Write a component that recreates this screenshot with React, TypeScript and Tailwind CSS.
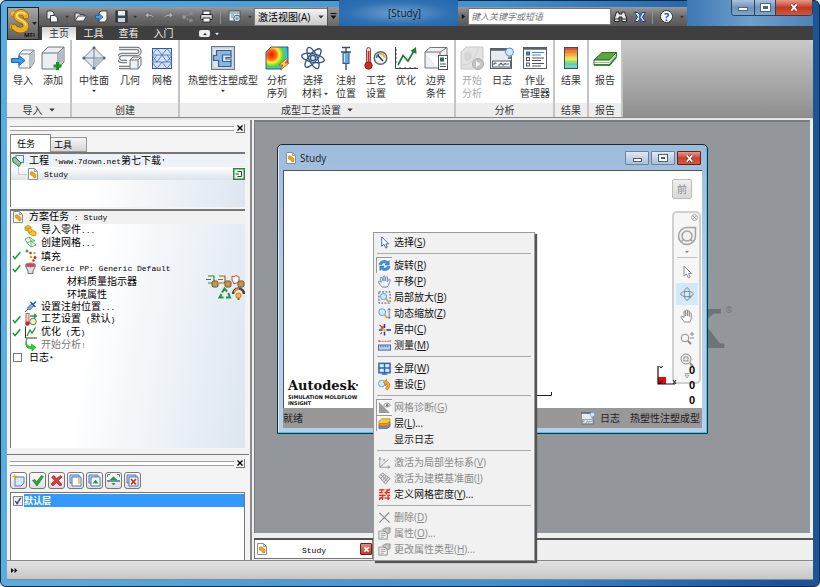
import React from "react";

type Kids = { children?: React.ReactNode };

const UI = "font-['Open_Sans','Noto_Sans_CJK_SC',sans-serif]";

/* ---------- small shared pieces ---------- */

function Caret({ className = "" }: { className?: string }) {
  return (
    <svg viewBox="0 0 6 4" className={`h-[4px] w-[6px] shrink-0 ${className}`} aria-hidden>
      <path d="M0.3 0.4H5.7L3 3.6Z" fill="currentColor" />
    </svg>
  );
}

function Mono({ children }: Kids) {
  return (
    <span className="whitespace-pre font-['Liberation_Mono',monospace] text-[8px]">{children}</span>
  );
}

function Svg({ size, box = 24, children }: { size: string; box?: number } & Kids) {
  return (
    <svg viewBox={`0 0 ${box} ${box}`} className={`shrink-0 ${size}`} fill="none" aria-hidden>
      {children}
    </svg>
  );
}

function StudyIcon() {
  return (
    <Svg size="size-[12px]" box={12}>
      <path d="M1.5 0.5H7.5L10.5 3.5V11.5H1.5Z" fill="#fdfdfd" stroke="#8b8f94" />
      <path d="M7.5 0.5V3.5H10.5" stroke="#8b8f94" strokeWidth="0.8" />
      <path d="M3 4.5L5 3.5 7 5 9 6.5V9.5L7 10 6 8 3.5 7Z" fill="#f0a90c" stroke="#b97402" strokeWidth="0.5" />
    </Svg>
  );
}

/* ---------- ribbon icons ---------- */

const ribbonIcons: Record<string, React.ReactNode> = {
  import: (
    <>
      <path d="M8 8L12 4H23V17L19 22H8Z" fill="#f2f4f6" stroke="#7c838b" />
      <path d="M8 8H19V22M19 8L23 4" stroke="#7c838b" />
      <path d="M19.5 8.5L22.5 5V17L19.5 20.5Z" fill="#bcc3ca" />
      <path d="M0.5 12.5H8V9.5L14 14.5 8 19.5V16.5H0.5Z" fill="#3d9be8" stroke="#1765ae" />
    </>
  ),
  add: (
    <>
      <path d="M1 7L7 1H23V16L17 23H1Z" fill="#eceef1" stroke="#6f757c" />
      <path d="M1 7H17V23M17 7L23 1" stroke="#6f757c" />
      <path d="M17.5 7.5L22.5 2.500V15L17.5 21Z" fill="#b5bbc2" />
      <path d="M16.5 16V24M12.5 20H20.5" stroke="#0b9a1c" strokeWidth="3" />
    </>
  ),
  midplane: (
    <>
      <path d="M12 1.5L22.5 12 12 22.5 1.5 12Z" fill="#dfe6ee" stroke="#75808c" />
      <path d="M12 1.5V22.5M1.5 12H22.5" stroke="#75808c" />
      <path d="M12.5 12.5L21.5 12.5 12.5 21.5Z" fill="#b8c3ce" />
      <circle cx="12" cy="1.8" r="1.5" fill="#5d6771" />
      <circle cx="12" cy="22.2" r="1.5" fill="#5d6771" />
      <circle cx="1.8" cy="12" r="1.5" fill="#5d6771" />
      <circle cx="22.2" cy="12" r="1.5" fill="#5d6771" />
    </>
  ),
  geometry: (
    <>
      <path d="M1 2.5H19A3 3 0 0 1 19 8.5H4A3.5 3.5 0 0 0 4 15.5H9M1 21.5H12" stroke="#5f656c" strokeWidth="3.4" />
      <path d="M1 2.5H19A3 3 0 0 1 19 8.5H4A3.5 3.5 0 0 0 4 15.5H9M1 21.5H12" stroke="#e8eaec" strokeWidth="1.4" />
      <path d="M12 14L15 11H23V19L20 23H12Z" fill="#eef0f2" stroke="#6f757c" />
      <path d="M12 14H20V23M20 14L23 11" stroke="#6f757c" />
    </>
  ),
  mesh: (
    <>
      <rect x="2.5" y="2.5" width="19" height="20" fill="#d4e4f8" stroke="#37588c" />
      <path d="M2 9H22M2 16H22M2 9L7 2.5 12 9 17 2.5 22 9M2 9L7 16 12 9 17 16 22 9M2 16L7 22.5 12 16 17 22.5 22 16M7 9L2 16M17 9L22 16" stroke="#4a78bc" strokeWidth="0.9" />
    </>
  ),
  thermo: (
    <>
      <rect x="0.5" y="0.5" width="23" height="23" fill="#c5ced8" stroke="#6b7886" />
      <rect x="2.5" y="2.5" width="19" height="19" fill="#e2e7ed" />
      <path d="M5.500 4.5H20V9H11.500V15.500H20V20.5H7.5V14.5H2.5V9.500H5.500Z" fill="#8ab4e2" stroke="#315f9a" strokeWidth="1.2" />
      <path d="M20 9V11.500H15V13H20V15.500" stroke="#315f9a" strokeWidth="1.2" />
    </>
  ),
  sequence: (
    <>
      <defs>
        <radialGradient id="heat" cx="0.25" cy="0.35" r="0.9">
          <stop offset="0" stopColor="#e81208" />
          <stop offset="0.25" stopColor="#ff6a10" />
          <stop offset="0.4" stopColor="#fff02a" />
          <stop offset="0.6" stopColor="#4dd34a" />
          <stop offset="0.78" stopColor="#2fc3ee" />
          <stop offset="1" stopColor="#1a48d8" />
        </radialGradient>
      </defs>
      <path d="M1 6L6 1H23V17L17 23H1Z" fill="url(#heat)" stroke="#3b5a86" />
      <path d="M21 13L14 19H18L15 24.5 24 17H20L23 13Z" fill="#ffdb4a" stroke="#d9601b" />
    </>
  ),
  material: (
    <g stroke="#2e5384" strokeWidth="1.3">
      <ellipse cx="12" cy="12" rx="11.5" ry="4.2" transform="rotate(12 12 12)" />
      <ellipse cx="12" cy="12" rx="11.5" ry="4.2" transform="rotate(66 12 12)" />
      <ellipse cx="12" cy="12" rx="11.5" ry="4.2" transform="rotate(-50 12 12)" />
      <circle cx="12" cy="12" r="2.6" fill="#dfe7f0" />
    </g>
  ),
  injection: (
    <>
      <path d="M8 1.5H16M7 6H17" stroke="#3c4d60" strokeWidth="1.6" />
      <path d="M12 2V6M12 18V24" stroke="#3c4d60" strokeWidth="1.4" />
      <rect x="9" y="6.5" width="6" height="11" fill="#68a9e4" stroke="#2f5d92" />
      <path d="M10.5 8V16" stroke="#d4e9fb" />
    </>
  ),
  process: (
    <>
      <rect x="2.5" y="1.5" width="4" height="16" rx="2" fill="#f6dcd6" stroke="#8c4a3f" />
      <rect x="3.7" y="5" width="1.8" height="13" fill="#cf2d1c" />
      <circle cx="4.5" cy="19.5" r="3.7" fill="#cf2d1c" stroke="#8c1f14" />
      <circle cx="16.5" cy="12" r="6.3" fill="#f4f5f6" stroke="#5f666d" strokeWidth="1.5" />
      <path d="M12.5 12A4 4 0 0 1 15.5 8" stroke="#2c7dd0" strokeWidth="1.7" />
      <path d="M15.5 8A4 4 0 0 1 20.5 12" stroke="#e8b81d" strokeWidth="1.7" />
      <path d="M14 9.5L19 15" stroke="#2b2f33" strokeWidth="1.4" />
    </>
  ),
  optimise: (
    <>
      <path d="M1.5 1V22.5H24" stroke="#3b4046" />
      <path d="M1 4H3M1 8H3M1 12H3M1 16H3M6 21V23M11 21V23M16 21V23M21 21V23" stroke="#3b4046" />
      <path d="M4 19L9 9.5 14 15 20.5 4" stroke="#1f7d35" strokeWidth="1.7" />
      <path d="M16.5 5L22 1 22.5 8Z" fill="#1f7d35" />
    </>
  ),
  boundary: (
    <>
      <path d="M1 6L6 1.5H23V12M1 6H16V13M1 6V22H14M16 6L23 1.5" fill="#eef0f2" stroke="#6f757c" />
      <rect x="14.5" y="9.5" width="9" height="14" fill="#fff" stroke="#4d545b" />
      <rect x="16" y="11.5" width="4" height="4" fill="#2d5c99" />
      <path d="M21 12.5H22.5M16 18H22M16 20.5H22" stroke="#4d545b" />
    </>
  ),
  start: (
    <g opacity="0.7">
      <path d="M1 6L6 1H23V17L17 23H1Z" fill="#d6d6d6" stroke="#b4b4b4" />
      <path d="M4 8C9 3 14 8 11 13S4 15 4 8" fill="#c4c4c4" />
      <path d="M1 19C9 20 16 14 18 2" stroke="#c0c0c0" />
      <circle cx="18" cy="18" r="5.500" fill="#aaa" stroke="#8e8e8e" />
      <path d="M16 15L21 18 16 21Z" fill="#eee" />
    </g>
  ),
  log: (
    <>
      <rect x="0.5" y="2.5" width="21" height="20" fill="#e6ebf0" stroke="#59626b" />
      <path d="M0.5 3.5H21.5" stroke="#59626b" strokeWidth="2.5" />
      <rect x="2.5" y="15" width="18" height="6" fill="#f5f6f7" stroke="#59626b" />
      <path d="M4 19V17H6V18M8 19H10V17.5H12V19H14V18L16 17.5V19M18 17V19" stroke="#363c42" strokeWidth="0.8" />
      <circle cx="19.5" cy="6" r="4" fill="#d0e8fb" stroke="#5a92c8" />
      <path d="M18 10.5H21V13H18Z" fill="#7a8692" />
    </>
  ),
  jobs: (
    <>
      <rect x="0.5" y="1.5" width="23" height="21" fill="#fff" stroke="#59626b" />
      <path d="M0.5 2.5H23.5" stroke="#59626b" strokeWidth="2.5" />
      <rect x="3.5" y="6" width="3" height="3" fill="#3c8be2" stroke="#2b65aa" />
      <rect x="3.5" y="11.5" width="3" height="3" stroke="#50575e" />
      <rect x="3.5" y="17" width="3" height="3" stroke="#50575e" />
      <path d="M9 6.5H21M9 9H18" stroke="#3c8be2" />
      <path d="M9 12H21M9 14.5H18M9 17.5H21M9 20H18" stroke="#50575e" />
    </>
  ),
  result: (
    <>
      <defs>
        <linearGradient id="scale" x1="0" y1="0" x2="0" y2="1">
          <stop offset="0" stopColor="#dd3b22" />
          <stop offset="0.35" stopColor="#f3a72f" />
          <stop offset="0.55" stopColor="#eef04a" />
          <stop offset="0.75" stopColor="#5ed08c" />
          <stop offset="1" stopColor="#6ed2f7" />
        </linearGradient>
      </defs>
      <rect x="5.5" y="1.5" width="13" height="21" fill="url(#scale)" stroke="#3c4f63" />
      <path d="M6 5H18M6 8H18M6 11H18M6 14H18M6 17H18M6 20H18" stroke="#fff" strokeOpacity="0.35" strokeWidth="0.6" />
    </>
  ),
  report: (
    <>
      <path d="M1 14L9 6.5H23.5L16.5 14Z" fill="#58a83c" stroke="#2b7420" />
      <path d="M1 14H16.5L23.5 6.5V10.5L16.5 19H1Z" fill="#eef1ee" stroke="#2b7420" />
      <path d="M2 16.5H16.5L23 9" stroke="#9ba79b" strokeWidth="0.8" />
      <path d="M1 19H16.5L23.5 11" stroke="#2b7420" strokeWidth="1.5" />
    </>
  ),
};

type Tool = { id: string; lines: string[]; width: string; menu?: boolean; off?: boolean };
type Group = { title: string; pad: string; menu?: boolean; tools: Tool[] };

const groups: Group[] = [
  {
    title: "导入",
    pad: "pl-px pr-[2px]",
    menu: true,
    tools: [
      { id: "import", lines: ["导入"], width: "w-[30px]" },
      { id: "add", lines: ["添加"], width: "w-[30px]" },
    ],
  },
  {
    title: "创建",
    pad: "pl-[4px] pr-[2px]",
    tools: [
      { id: "midplane", lines: ["中性面"], width: "w-[36px]", menu: true },
      { id: "geometry", lines: ["几何"], width: "w-[36px]" },
      { id: "mesh", lines: ["网格"], width: "w-[28px]" },
    ],
  },
  {
    title: "成型工艺设置",
    pad: "pl-[7px] pr-[3px]",
    menu: true,
    tools: [
      { id: "thermo", lines: ["热塑性注塑成型"], width: "w-[72px]", menu: true },
      { id: "sequence", lines: ["分析", "序列"], width: "w-[36px]" },
      { id: "material", lines: ["选择", "材料"], width: "w-[36px]", menu: true },
      { id: "injection", lines: ["注射", "位置"], width: "w-[30px]" },
      { id: "process", lines: ["工艺", "设置"], width: "w-[30px]" },
      { id: "optimise", lines: ["优化"], width: "w-[30px]" },
      { id: "boundary", lines: ["边界", "条件"], width: "w-[30px]" },
    ],
  },
  {
    title: "分析",
    pad: "pl-px",
    tools: [
      { id: "start", lines: ["开始", "分析"], width: "w-[30px]", off: true },
      { id: "log", lines: ["日志"], width: "w-[30px]" },
      { id: "jobs", lines: ["作业", "管理器"], width: "w-[36px]" },
    ],
  },
  { title: "结果", pad: "px-px", tools: [{ id: "result", lines: ["结果"], width: "w-[30px]" }] },
  { title: "报告", pad: "px-px", tools: [{ id: "report", lines: ["报告"], width: "w-[30px]" }] },
];

function Ribbon() {
  return (
    <div className="flex h-[77px] shrink-0 bg-linear-to-b from-[#c9c9c9] to-[#8e8e8e]">
      {groups.map((g) => (
        <section key={g.title} aria-label={g.title} className="flex flex-col border-r-2 border-[#c4c4c4] bg-white">
          <div className={`flex flex-1 pt-[6px] ${g.pad}`}>
            {g.tools.map((t) => (
              <button
                key={t.id}
                disabled={t.off}
                className={`flex flex-col items-center text-[10px] leading-[13px] whitespace-nowrap ${t.width} ${t.off ? "text-[#a9a9a9]" : "text-[#333]"}`}
              >
                <Svg size="size-[24px]">{ribbonIcons[t.id]}</Svg>
                <span className="mt-[4px] block h-[13px]">{t.lines[0]}</span>
                {t.lines[1] ? (
                  <span className="flex items-center">
                    {t.menu && <span className="w-[5px]" />}
                    {t.lines[1]}
                    {t.menu && <Caret className="ml-px scale-75" />}
                  </span>
                ) : (
                  t.menu && <Caret className="mt-[2px] scale-75" />
                )}
              </button>
            ))}
          </div>
          <h2 className="flex h-[14px] items-center justify-center gap-[6px] bg-[#ededed] text-[10px] whitespace-nowrap text-[#333]">
            {g.title}
            {g.menu && <Caret />}
          </h2>
        </section>
      ))}
    </div>
  );
}

/* ---------- title bar ---------- */

function QuickButton({ label, className = "w-[19px]", children }: { label: string; className?: string } & Kids) {
  return (
    <button aria-label={label} className={`flex h-full shrink-0 items-center justify-center ${className}`}>
      {children}
    </button>
  );
}

function WindowButtons() {
  return (
    <div className="flex h-[16px] w-[82px] shrink-0 self-start overflow-hidden rounded-b-[4px] border border-t-0 border-[#2b4360]">
      <button aria-label="最小化" className="flex w-[22px] items-end justify-center bg-linear-to-b from-[#a9c3dd] via-[#6f93b9] to-[#7ea5cb] pb-[4px]">
        <span className="h-[4px] w-[10px] border border-[#4c6480] bg-white" />
      </button>
      <button aria-label="最大化" className="flex w-[22px] items-center justify-center border-x border-[#2b4360] bg-linear-to-b from-[#a9c3dd] via-[#6f93b9] to-[#7ea5cb]">
        <span className="h-[7px] w-[9px] border-2 border-white bg-[#4c6480] outline outline-[#4c6480]" />
      </button>
      <button aria-label="关闭" className="flex flex-1 items-center justify-center bg-linear-to-b from-[#e39a8c] via-[#c3371f] to-[#d2553c]">
        <Svg size="h-[9px] w-[10px]" box={10}>
          <path d="M2 1.5L8 8.5M8 1.5L2 8.5" stroke="#6f2a20" strokeWidth="3.6" />
          <path d="M2 1.5L8 8.5M8 1.5L2 8.5" stroke="#fff" strokeWidth="2.2" />
        </Svg>
      </button>
    </div>
  );
}

function Header() {
  return (
    <header className="flex shrink-0">
      <button aria-label="应用程序菜单" className="mt-[7px] flex h-[33px] w-[32px] shrink-0 flex-col items-end border border-[#222] bg-linear-to-b from-[#a8a8a8] to-[#5e5e5e]">
        <svg viewBox="0 0 30 31" className="h-[31px] w-[30px]" aria-hidden>
          <defs>
            <linearGradient id="gold" x1="0" y1="0" x2="1" y2="1">
              <stop offset="0" stopColor="#fff0a0" />
              <stop offset="0.45" stopColor="#f2b015" />
              <stop offset="1" stopColor="#a86a04" />
            </linearGradient>
          </defs>
          <circle cx="5.5" cy="6" r="3" fill="url(#gold)" stroke="#9a6606" strokeWidth="0.4" />
          <circle cx="5" cy="19" r="3" fill="url(#gold)" stroke="#9a6606" strokeWidth="0.4" />
          <path d="M18 8C17 3 8 3 8.500 8.500C9 13 18.500 12 18 18C17.500 23 9 23.500 6 19" fill="none" stroke="#8a5a06" strokeWidth="6" strokeLinecap="round" />
          <path d="M18 8C17 3 8 3 8.500 8.500C9 13 18.500 12 18 18C17.500 23 9 23.500 6 19" fill="none" stroke="#f0ae18" strokeWidth="4.800" strokeLinecap="round" />
          <path d="M17 6C15 3.500 9 4 8.500 7.500C9 12 18 12 17.500 17" fill="none" stroke="#fde58a" strokeWidth="1.500" strokeLinecap="round" />
          <path d="M24 14H29L26.5 17Z" fill="#222" />
          <text x="16" y="29" fontFamily="Open Sans" fontWeight="700" fontSize="6" fill="#111">MFI</text>
        </svg>
      </button>

      <div className="flex min-w-0 flex-1 flex-col">
        <div className="flex h-[26px]">
          <div className="mt-[7px] flex items-center bg-linear-to-b from-[#9a9a9a] via-[#6c6c6c] to-[#585858] pl-[4px] text-[#333]">
            <QuickButton label="新建">
              <Svg size="size-[13px]" box={13}>
                <path d="M1 1H6L8 3V9H1Z" fill="#eee" stroke="#3a3a3a" />
                <path d="M4.500 5.500H9L11.500 8V12H4.500Z" fill="#f5f5f5" stroke="#3a3a3a" />
              </Svg>
            </QuickButton>
            <QuickButton label="新建选项" className="w-[9px]"><Caret className="scale-75" /></QuickButton>
            <QuickButton label="打开">
              <Svg size="size-[13px]" box={13}>
                <path d="M1 11V3H5L6 4.5H10V6" fill="#ddd" stroke="#444" />
                <path d="M1 11L4 6H12.5L9.5 11Z" fill="#f4f4f4" stroke="#444" />
              </Svg>
            </QuickButton>
            <QuickButton label="导入" className="w-[22px]">
              <Svg size="size-[13px]" box={13}>
                <path d="M4 3L6 1H12V9L10 12H4Z" fill="#f4f4f4" stroke="#444" />
                <path d="M0.5 5.5H4V3.5L8 7 4 10.5V8.5H0.5Z" fill="#39a0f2" stroke="#145a9c" strokeWidth="0.7" />
              </Svg>
            </QuickButton>
            <QuickButton label="保存" className="w-[18px]">
              <Svg size="size-[13px]" box={13}>
                <rect x="1" y="1" width="11" height="11" fill="#39465a" stroke="#1f2732" />
                <rect x="3" y="1" width="7" height="4.5" fill="#eee" />
                <rect x="3" y="8" width="7" height="4" fill="#cfd4da" />
              </Svg>
            </QuickButton>
            <QuickButton label="保存选项" className="w-[10px]"><Caret className="scale-75" /></QuickButton>
            <QuickButton label="撤消">
              <Svg size="h-[11px] w-[13px]" box={12}>
                <path d="M5 1L1 4.5 5 8V5.5C9 5.5 10.5 7 11 10.5 11.5 5.5 9 3.5 5 3.5Z" fill="#b4b4b4" stroke="#505050" strokeWidth="0.5" />
              </Svg>
            </QuickButton>
            <QuickButton label="重做">
              <Svg size="h-[11px] w-[13px]" box={12}>
                <path d="M7 1L11 4.5 7 8V5.5C3 5.5 1.5 7 1 10.5 0.5 5.5 3 3.5 7 3.5Z" fill="#b4b4b4" stroke="#505050" strokeWidth="0.5" />
              </Svg>
            </QuickButton>
            <QuickButton label="共享">
              <Svg size="size-[12px]" box={12}>
                <path d="M2 6L9 2M2 6L9 10" stroke="#9b9b9b" strokeDasharray="2 1" />
                <circle cx="2" cy="6" r="1.8" fill="#999" />
                <circle cx="9" cy="2.5" r="1.8" fill="#8b8b8b" />
                <circle cx="9" cy="9.5" r="1.8" fill="#8b8b8b" />
              </Svg>
            </QuickButton>
            <QuickButton label="打印">
              <Svg size="size-[13px]" box={13}>
                <rect x="3" y="1" width="7" height="4" fill="#fff" stroke="#333" />
                <rect x="0.7" y="4.5" width="11.6" height="5" rx="1" fill="#d8d8d8" stroke="#222" />
                <rect x="3" y="8" width="7" height="4" fill="#fff" stroke="#333" />
              </Svg>
            </QuickButton>
            <span className="mx-[4px] h-[15px] w-px bg-[#8f8f8f]" />
            <QuickButton label="捕获图像">
              <Svg size="size-[14px]" box={14}>
                <rect x="1" y="1" width="11" height="10" fill="#e8eef2" stroke="#4a5560" />
                <path d="M1 3H12M3 5H6M3 7H5" stroke="#5e86a0" />
                <circle cx="9" cy="8.5" r="3.3" fill="#bfe0f0" stroke="#44525e" />
                <circle cx="9" cy="8.5" r="1.3" fill="#4a8fc0" />
              </Svg>
            </QuickButton>
            <QuickButton label="图像选项" className="w-[11px]"><Caret className="scale-75" /></QuickButton>
            <div className="grid h-[16px] w-[72px] items-center bg-linear-to-b from-[#f4f4f4] to-[#c9c9c9] text-black">
              <select aria-label="视图" className="col-start-1 row-start-1 h-[16px] w-full appearance-none bg-transparent pl-[3px] text-[10px] leading-[16px] outline outline-[#777]">
                <option>激活视图(A)</option>
              </select>
              <Caret className="pointer-events-none col-start-1 row-start-1 mr-[3px] justify-self-end text-[#333]" />
            </div>
            <QuickButton label="自定义快速访问工具栏" className="w-[12px] border-l border-[#555] bg-linear-to-b from-[#999] to-[#666]">
              <Svg size="size-[7px]" box={7}>
                <path d="M0.5 0.5H6.5" stroke="#111" />
                <path d="M0.5 2.5H6.5L3.5 6Z" fill="#111" />
              </Svg>
            </QuickButton>
          </div>

          <h1 className="flex min-w-0 flex-1 items-center justify-center bg-[radial-gradient(ellipse_at_center,#6f9fcd_0%,#2f71b3_60%,#2367ab_100%)] pl-[12px] text-[10px] text-[#0b1624]">[Study]</h1>

          <div className="mt-[7px] flex items-center bg-linear-to-b from-[#9a9a9a] via-[#6c6c6c] to-[#585858]">
            <QuickButton label="展开搜索" className="w-[10px]">
              <Svg size="h-[7px] w-[5px]" box={6}><path d="M1 0L5 3 1 6Z" fill="#111" /></Svg>
            </QuickButton>
            <input aria-label="搜索" placeholder="键入关键字或短语" className="h-[17px] w-[143px] border border-[#777] bg-white px-[2px] text-[9px] italic placeholder:text-[#777]" />
            <QuickButton label="搜索">
              <Svg size="size-[13px]" box={13}>
                <path d="M2.5 2H5V4H8V2H10.5L12.5 8V11.5H8V7H5V11.5H0.5V8Z" fill="#e8e8e8" stroke="#252525" />
                <path d="M1 9H5M8 9H12" stroke="#252525" />
              </Svg>
            </QuickButton>
            <QuickButton label="交换">
              <Svg size="size-[12px]" box={12}>
                <path d="M0.5 1.5H4L6 4.5 8 1.5H11.5L8.5 6 11.5 10.5H8L6 7.5 4 10.5H0.5L3.5 6Z" fill="#e4ebf8" stroke="#223c85" />
                <path d="M8 2L5.5 6 8 10" stroke="#2c5ac0" strokeWidth="1.5" />
              </Svg>
            </QuickButton>
            <span className="mx-[3px] h-[15px] w-px bg-[#8f8f8f]" />
            <QuickButton label="帮助" className="w-[21px]">
              <span className="flex size-[13px] items-center justify-center rounded-full border border-[#333] bg-white text-[11px] leading-none font-bold text-[#1b55b8]">?</span>
            </QuickButton>
            <QuickButton label="帮助选项" className="w-[10px] text-[#333]"><Caret className="scale-75" /></QuickButton>
          </div>

          <div className="flex w-[126px] shrink-0 justify-end bg-linear-to-r from-[#3c78b4] via-[#6f9fcb] to-[#4d83b9]">
            <WindowButtons />
          </div>
        </div>

        <nav className="flex h-[14px] items-end bg-[#3f3f3f] pl-[3px] text-[10px] leading-[13px] text-[#eee]">
          <button className="h-[13px] w-[34px] bg-linear-to-b from-[#cfcfcf] to-white text-[#333]">主页</button>
          <button className="w-[35px]">工具</button>
          <button className="w-[35px]">查看</button>
          <button className="w-[35px]">入门</button>
          <button aria-label="最小化功能区" className="ml-[18px] flex h-[13px] items-center gap-[4px]">
            <span className="flex h-[7px] w-[11px] items-center justify-center rounded-[2px] bg-[#eee] text-[#333]">
              <Caret className="rotate-180 scale-75" />
            </span>
            <Caret className="scale-75" />
          </button>
        </nav>
      </div>
    </header>
  );
}

/* ---------- left docked panels ---------- */

function Grip({ label }: { label: string }) {
  return (
    <div className="flex h-[10px] items-center gap-[2px]">
      <span className="h-[5px] flex-1 border-y border-[#a0a0a0] bg-white" />
      <button aria-label={label} className="flex size-[9px] items-center justify-center border-r border-b border-[#777]">
        <Svg size="size-[6px]" box={6}><path d="M0.5 0.5L5.5 5.5M5.5 0.5L0.5 5.5" stroke="#000" strokeWidth="1.4" /></Svg>
      </button>
    </div>
  );
}

function Tick() {
  return (
    <Svg size="size-[9px]" box={9}><path d="M0.8 5L3 7.5 8.3 1.2" stroke="#13a02a" strokeWidth="1.5" /></Svg>
  );
}

const taskIcons: Record<string, React.ReactNode> = {
  part: (
    <g stroke="#b87a06" strokeWidth="0.7">
      <path d="M1 3L4 1 7 3V5L12 8V11L9 12 5 9.5 4 7 1 6Z" fill="#f8c22c" />
      <path d="M1 3L4 5V7M4 5L7 3M5 9L8 7" />
    </g>
  ),
  mesh: <path d="M1 3L5 1 7 5 3 7ZM5 1L11 5 7 5M3 7L7 11 12 9 7 5M7 11L7 5" stroke="#35a83e" strokeWidth="0.8" />,
  fill: (
    <>
      <circle cx="3" cy="2" r="1.5" fill="#2aa83c" />
      <circle cx="6.5" cy="4" r="1.3" fill="#d3261c" />
      <circle cx="10.5" cy="4" r="1.2" fill="#e9a41a" />
      <circle cx="7" cy="8" r="1.3" fill="#e9a41a" />
      <circle cx="11" cy="8.5" r="1.5" fill="#d3261c" />
      <circle cx="9.5" cy="11.5" r="1.2" fill="#d3261c" />
    </>
  ),
  cone: (
    <>
      <path d="M1.5 4L4 9V11.5H9V9L11.5 4Z" fill="#dfe2e8" stroke="#6a6f7a" />
      <ellipse cx="6.5" cy="3" rx="5" ry="2" fill="#e0413a" stroke="#8c8f9a" />
    </>
  ),
  syringe: (
    <>
      <path d="M1 12L4 9" stroke="#444" />
      <path d="M3.5 8L8 3.5 10 5.5 5.5 10Z" fill="#8cbcf0" stroke="#1f55a4" />
      <path d="M6.5 2L11.5 7M9 4.5L12 1.5" stroke="#1f55a4" strokeWidth="1.4" />
    </>
  ),
  process: (
    <>
      <rect x="2" y="0.5" width="3" height="9" fill="#f3d0cb" stroke="#b13b30" strokeWidth="0.7" />
      <circle cx="3.5" cy="10.5" r="2.3" fill="#d1291d" />
      <circle cx="9" cy="8.5" r="3.3" fill="#f5efaa" stroke="#4b74a8" />
      <path d="M6 3H12M10 1L12.5 3 10 5" stroke="#2a9a3a" strokeWidth="1.3" />
    </>
  ),
  chart: (
    <>
      <path d="M1.5 0.5V12H13" stroke="#333" />
      <path d="M3 10L6 4 8 7 11.5 1.5" stroke="#248a3c" strokeWidth="1.3" />
    </>
  ),
  go: <path d="M3 1C1.5 5 3 8.5 7.5 8.5V6L12 9.5 8 13V11C2 11 0 6 3 1Z" fill="#2ed12e" stroke="#149a1c" strokeWidth="0.6" />,
};

type Task = { icon: string; done?: boolean; off?: boolean; text: React.ReactNode };

const setupTasks: Task[] = [
  { icon: "part", text: <>导入零件<Mono>...</Mono></> },
  { icon: "mesh", text: <>创建网格<Mono>...</Mono></> },
  { icon: "fill", done: true, text: "填充" },
  { icon: "cone", done: true, text: <Mono>Generic PP: Generic Default</Mono> },
];

const analysisTasks: Task[] = [
  { icon: "syringe", text: <>设置注射位置<Mono>...</Mono></> },
  { icon: "process", done: true, text: <>工艺设置<Mono> (</Mono>默认<Mono>)</Mono></> },
  { icon: "chart", done: true, text: <>优化<Mono> (</Mono>无<Mono>)</Mono></> },
  { icon: "go", off: true, text: <>开始分析<Mono>!</Mono></> },
];

function TaskRow({ task }: { task: Task }) {
  return (
    <li className={`flex items-center pl-px ${task.off ? "text-[#777]" : ""}`}>
      <span className="w-[12px] shrink-0">{task.done && <Tick />}</span>
      <Svg size="size-[13px]" box={13}>{taskIcons[task.icon]}</Svg>
      <span className="ml-[4px]">{task.text}</span>
    </li>
  );
}

function MaterialBadges() {
  return (
    <svg viewBox="0 0 39 13" className="h-[13px] w-[39px]" fill="none" aria-hidden>
      <path d="M2 1H8V8H2M0 4.5H5" stroke="#2a8c38" strokeWidth="1.2" />
      <path d="M13 1H19V8H13M12 4.5H17" stroke="#a06a22" strokeWidth="1.2" />
      <path d="M26 1L28 2 30 0.5 33 2V7L28 9 26 5Z" stroke="#a8574c" fill="#fbf3f0" />
      {[6, 19, 32].map((x) => (
        <rect key={x} x={x} y="6" width="6" height="6" rx="1.5" fill="#c09a52" stroke="#6e5020" />
      ))}
    </svg>
  );
}

function EnvironmentBadges() {
  return (
    <svg viewBox="0 0 27 13" className="h-[13px] w-[27px]" fill="none" aria-hidden>
      <path d="M4 5.500L6.5 1.500 9 4.500M10.300 6L12 10.500H8M5.500 10.500H1.500L3.500 7" stroke="#23963a" strokeWidth="2" />
      <path d="M15 7A5.5 5.5 0 0 1 26 7" stroke="#454545" strokeWidth="2.5" />
      <path d="M16.5 5A4.5 4.5 0 0 1 21 2" stroke="#e88a1c" strokeWidth="2" />
      <circle cx="20.5" cy="8.5" r="2.6" fill="#f6bd3a" stroke="#c87a10" />
      <rect x="19.5" y="11" width="2" height="2" fill="#666" />
    </svg>
  );
}

const layerTools: { label: string; art: React.ReactNode }[] = [
  { label: "新建层", art: <><path d="M3 3H12V9L9 12H3Z" fill="#dbe7f8" stroke="#5b7fb8" /><path d="M0.5 2.5H5M2.7 0.5V5" stroke="#e8a610" strokeWidth="1.3" /></> },
  { label: "激活层", art: <path d="M1.5 6.5L4 5.5 5.5 8 10.5 1.5 12.5 2.5 6 12Z" fill="#27a83a" stroke="#11701f" strokeWidth="0.6" /> },
  { label: "删除层", art: <path d="M1.5 3L4 1.5 6.5 4.5 10.5 1.5 12 3 8.5 6.5 12 10.5 10 12 6.5 8.5 3 12 1 10 4.5 6.5Z" fill="#df3a3e" stroke="#8f1a20" strokeWidth="0.6" /> },
  { label: "层属性", art: <><path d="M1 1H10V9H1Z" fill="#c7daf4" stroke="#4c76b6" /><path d="M3 3H12V12H3Z" fill="#fff" stroke="#4c76b6" /><path d="M9 5H11M9 7H11M9 9H11" stroke="#e0871c" /></> },
  { label: "显示层", art: <><path d="M1 1H10V9H1Z" fill="#c7daf4" stroke="#4c76b6" /><path d="M3 3H12V12H3Z" fill="#fff" stroke="#4c76b6" /><path d="M4.5 9.5L7.5 5.5 10.5 9.5Z" fill="#24964a" /></> },
  { label: "扩展层", art: <><path d="M2.5 6L6.5 2.5 10.5 6ZM4.5 9L6.5 11.5 8.5 9Z" fill="#24964a" /><path d="M0 7H13" stroke="#37688c" strokeWidth="1.4" /><path d="M0.5 3V0.5H3M10 0.5H12.5V3" stroke="#4c76b6" /></> },
  { label: "清除层", art: <><path d="M1 1H10V9H1Z" fill="#c7daf4" stroke="#4c76b6" /><path d="M3 3H12V12H3Z" fill="#fff" stroke="#4c76b6" /><path d="M5 5L10 10.5M10 5L5 10.5" stroke="#d3301d" strokeWidth="1.8" /></> },
];

function Sidebar() {
  const sheet = "border-t-2 border-l border-[#777] bg-[linear-gradient(100deg,#ffffff_35%,#dde6f0_100%)]";
  return (
    <aside className="flex w-[245px] shrink-0 flex-col border-r-2 border-[#8a8a8a] bg-[#f3f3f3] pt-[3px] pr-[5px] pl-[3px] text-[10px]">
      <Grip label="关闭任务面板" />
      <div role="tablist" className="mt-px flex h-[18px] items-end text-[9px]">
        <button role="tab" aria-selected className="h-[18px] w-[41px] border-x border-t border-[#888] bg-white pr-[9px]">任务</button>
        <button role="tab" className="h-[15px] w-[36px] border border-l-0 border-[#999] bg-linear-to-b from-[#f6f6f6] to-[#d5d5d5] pr-[11px]">工具</button>
      </div>

      <ul className={`h-[55px] shrink-0 leading-[13px] whitespace-nowrap ${sheet}`}>
        <li className="flex h-[13px] items-center gap-[5px] bg-[#edf2f7] pl-px">
          <Svg size="size-[12px]" box={12}>
            <rect x="4" y="0.5" width="7.5" height="7" fill="#e9f2fd" stroke="#5584c8" />
            <path d="M0.5 3L3 2 9 8 7 11.5 1 7Z" fill="#93c294" stroke="#3c7a42" />
          </Svg>
          <span>工程<Mono> 'www.7down.net</Mono>第七下载<Mono>'</Mono></span>
        </li>
        <li className="flex h-[13px] items-center bg-linear-to-b from-white to-[#dbe3ea] pl-[7px]">
          <span className="mb-[5px] h-[8px] w-[9px] border-b border-l border-[#ccc]" />
          <StudyIcon />
          <span className="ml-[5px] flex-1"><Mono>Study</Mono></span>
          <Svg size="size-[12px]" box={12}>
            <rect x="0.75" y="0.75" width="10.5" height="10.5" fill="#eef8ef" stroke="#2a8c38" strokeWidth="1.5" />
            <path d="M4.5 3.500H8.500V8.500H4.5M2.500 6H6" stroke="#24572c" />
          </Svg>
        </li>
      </ul>

      <div className={`mt-[2px] flex-1 ${sheet}`}>
        <ul className="grid h-[153px] grid-rows-12 leading-[12px] whitespace-nowrap">
          <li className="flex items-center gap-[5px] bg-[#f1f1f1] pl-px">
            <StudyIcon />
            <span>方案任务<Mono> : Study</Mono></span>
          </li>
          {setupTasks.map((t) => <TaskRow key={t.icon} task={t} />)}
          <li className="flex items-center justify-between pl-[56px]">材料质量指示器<MaterialBadges /></li>
          <li className="flex items-center justify-between pl-[56px]">环境属性<EnvironmentBadges /></li>
          {analysisTasks.map((t) => <TaskRow key={t.icon} task={t} />)}
          <li className="flex items-center pl-[2px]">
            <label className="flex items-center gap-[7px]">
              <input type="checkbox" className="size-[9px] appearance-none border border-[#777] bg-white" />
              <span>日志<Mono>*</Mono></span>
            </label>
          </li>
        </ul>
      </div>

      <div className="mt-[6px] -mr-[4px] -ml-[3px] border-t border-[#777]" />
      <div className="mt-[3px]"><Grip label="关闭层面板" /></div>
      <div className="mt-[4px] flex gap-[2px]">
        {layerTools.map((t) => (
          <button key={t.label} aria-label={t.label} className="flex size-[17px] items-center justify-center rounded-[3px] border border-[#777] bg-linear-to-b from-white to-[#dedede]">
            <Svg size="size-[13px]" box={13}>{t.art}</Svg>
          </button>
        ))}
      </div>
      <div className="mt-[3px] h-[68px] border-x border-t border-[#777] bg-white pt-px pl-px">
        <label className="flex h-[13px] items-center gap-px">
          <span className="grid size-[11px] place-items-center">
            <input type="checkbox" defaultChecked className="col-start-1 row-start-1 size-[10px] appearance-none border border-[#888] bg-[#e9edf3]" />
            <Svg size="pointer-events-none col-start-1 row-start-1 size-[8px]" box={9}><path d="M1.5 4.5L3.5 7.5 7.5 1" stroke="#2b3d78" strokeWidth="1.5" /></Svg>
          </span>
          <span className="flex-1 bg-[#3399ff] text-[9px] leading-[13px] font-bold text-white">默认层</span>
        </label>
      </div>
    </aside>
  );
}

/* ---------- document window ---------- */

function NavigationBar() {
  const tool = "flex h-[22px] w-[22px] items-center justify-center";
  return (
    <div className="absolute top-[40px] right-px flex w-[29px] flex-col items-center rounded-[5px] border-2 border-[#cfcfcf] bg-[#f6f6f6] pb-[3px] text-[#888]">
      <button aria-label="关闭导航栏" className="mr-[1px] flex h-[9px] items-center self-end">
        <Svg size="size-[7px]" box={8}><circle cx="4" cy="4" r="3.3" stroke="#999" /><path d="M2.5 2.5L5.5 5.5M5.5 2.5L2.5 5.5" stroke="#999" /></Svg>
      </button>
      <button aria-label="控制盘" className="mt-[4px]">
        <Svg size="size-[20px]" box={20}>
          <path d="M10 1.5H18.5V10A8.5 8.5 0 1 1 10 1.5Z" fill="#f1f1f1" stroke="#a3a3a3" strokeWidth="1.5" />
          <circle cx="10" cy="10" r="5" stroke="#a3a3a3" strokeWidth="1.5" />
          <path d="M6.5 13.5L4 16M13.5 13.5L16 16" stroke="#a3a3a3" strokeWidth="1.3" />
        </Svg>
      </button>
      <Caret className="mt-[4px] scale-75" />
      <span className="mt-[3px] h-px w-[20px] bg-[#c0c0c0]" />
      <button aria-label="选择" className={`mt-[3px] ${tool}`}>
        <Svg size="size-[14px]" box={14}><path d="M4 1V11L6.5 9 8.5 13 10 12 8.5 8.5H11.5Z" stroke="#8b8b8b" fill="#fff" /></Svg>
      </button>
      <button aria-label="动态观察" className={`${tool} bg-[#d3e9fa]`}>
        <Svg size="size-[14px]" box={14}>
          <ellipse cx="7" cy="7" rx="6.3" ry="2.7" stroke="#7f8f9e" />
          <ellipse cx="7" cy="7" rx="2.7" ry="6.3" stroke="#7f8f9e" />
          <path d="M9 9.5L12 9 10 12Z" fill="#7f8f9e" />
        </Svg>
      </button>
      <button aria-label="平移" className={tool}>
        <Svg size="size-[14px]" box={14}>
          <path d="M4.5 13C3 11 1 9 1 7.5 2 6.5 3 8 4 8.5V3C4 1.5 5.5 1.5 5.7 3V7 2C6 0.5 7.5 0.5 7.7 2V7 2.5C8 1.3 9.5 1.5 9.6 3V7.5 4.5C10 3.5 11.5 4 11.5 5.5 11.5 9 11 11 10 13Z" stroke="#8b8b8b" fill="#fff" />
        </Svg>
      </button>
      <button aria-label="缩放" className={tool}>
        <Svg size="size-[14px]" box={14}>
          <circle cx="5" cy="7" r="3.8" stroke="#8b8b8b" />
          <path d="M8 10L11 13" stroke="#8b8b8b" strokeWidth="2" />
          <path d="M10 3H14M12 1V5M10 7H14" stroke="#8b8b8b" />
        </Svg>
      </button>
      <button aria-label="窗口缩放" className={tool}>
        <Svg size="size-[14px]" box={14}>
          <circle cx="6" cy="6" r="5" stroke="#8b8b8b" />
          <rect x="4" y="4" width="4" height="4" stroke="#8b8b8b" />
          <path d="M10 10L13 13.5" stroke="#8b8b8b" strokeWidth="2" />
        </Svg>
      </button>
      <Svg size="mt-[2px] size-[6px]" box={6}><path d="M0.5 0.5H5.5M1 2H5L3 5Z" stroke="#888" strokeWidth="0.7" /></Svg>
    </div>
  );
}

function StudyWindow() {
  const btn = "flex h-[14px] w-[24px] items-center justify-center rounded-[1px] border";
  return (
    <section aria-label="Study" className="absolute top-[22px] left-[22px] flex h-[290px] w-[431px] flex-col rounded-t-[5px] border border-[#1d2b38] bg-linear-to-b from-[#9dbcdb] via-[#b9cfe8] to-[#b4cfea] px-[5px] pb-[5px] shadow-[inset_-1px_-1px_0_#2fd0f5,inset_1px_0_0_#dceaf8]">
      <header className="flex h-[25px] shrink-0 items-center pt-px pr-px pl-[2px] text-[10px] text-[#16202c]">
        <StudyIcon />
        <span className="ml-[3px] flex-1">Study</span>
        <span className="flex gap-[2px]">
          <button aria-label="最小化" className={`${btn} border-[#6d8299] bg-linear-to-b from-[#dfe9f4] to-[#a9c0d8]`}>
            <span className="mt-[3px] h-[4px] w-[9px] border border-[#53616f] bg-white" />
          </button>
          <button aria-label="最大化" className={`${btn} border-[#6d8299] bg-linear-to-b from-[#dfe9f4] to-[#a9c0d8]`}>
            <span className="h-[6px] w-[8px] border-2 border-white bg-[#53616f] outline outline-[#53616f]" />
          </button>
          <button aria-label="关闭" className={`${btn} border-[#6b2118] bg-linear-to-b from-[#e49a8c] via-[#c8412c] to-[#d05a42]`}>
            <Svg size="size-[9px]" box={10}><path d="M2 1.5L8 8.5M8 1.5L2 8.5" stroke="#7d3027" strokeWidth="3.6" /><path d="M2 1.5L8 8.5M8 1.5L2 8.5" stroke="#fff" strokeWidth="2" /></Svg>
          </button>
        </span>
      </header>

      <div className="relative flex-1 border-t border-l border-[#555] bg-white">
        <button className="absolute top-[8px] right-[10px] size-[20px] rounded-[2px] border border-[#bdbdbd] bg-linear-to-b from-[#efefef] to-[#d8d8d8] text-[10px] leading-[16px] text-[#8d8d8d]">前</button>
        <NavigationBar />
        <div className="absolute bottom-[2px] left-[4px] text-[#111]">
          <div className="flex font-['DejaVu_Serif',serif] text-[13px] leading-[16px] font-bold">
            Autodesk<span className="mt-[6px] size-[2px] rounded-full bg-[#111]" />
          </div>
          <div className="font-['DejaVu_Sans',sans-serif] text-[5px] leading-[6px] font-bold">SIMULATION MOLDFLOW<br />INSIGHT</div>
        </div>
        <svg viewBox="0 0 30 6" className="absolute right-[150px] bottom-[11px] h-[6px] w-[30px]" aria-hidden>
          <path d="M0 4.5H29.5V1" fill="none" stroke="#222" />
        </svg>
        <svg viewBox="0 0 22 20" className="absolute right-[24px] bottom-[23px] h-[20px] w-[22px]" fill="none" aria-hidden>
          <rect x="2" y="12" width="8" height="7" fill="#f00" />
          <path d="M2 1V19H19M3 19L7 15" stroke="#111" strokeWidth="1.2" />
          <path d="M3.5 1L5 3 6.5 1M17 15L20 19M20 15L17 19" stroke="#111" />
        </svg>
        <div className="absolute right-[7px] bottom-0 font-['Liberation_Sans',sans-serif] text-[11px] leading-[15px] font-bold text-black">
          <div>0</div>
          <div>0</div>
          <div>0</div>
        </div>
      </div>

      <footer className="flex h-[20px] shrink-0 items-center bg-[#989898] pr-[2px] text-[10px] text-[#222]">
        <span className="flex-1">就绪</span>
        <Svg size="size-[14px]" box={24}>{ribbonIcons.log}</Svg>
        <span className="ml-[5px]">日志</span>
        <span className="ml-[10px]">热塑性注塑成型</span>
      </footer>
    </section>
  );
}

/* ---------- context menu ---------- */

const menuIcons: Record<string, React.ReactNode> = {
  select: <path d="M4 1V11L6.5 9 8.5 13 10 12 8.5 8.5H11.5Z" fill="#fff" stroke="#46618f" />,
  rotate: (
    <g fill="#3b97ea" stroke="#135eac" strokeWidth="0.6">
      <path d="M1 6C1.5 2 7 0 10.5 3L12 1.5V6.5H7.5L9 5C7 3.5 4.5 4 4 6Z" />
      <path d="M13 8C12.5 12 7 14 3.5 11L2 12.5V7.5H6.5L5 9C7 10.5 9.5 10 10 8Z" />
    </g>
  ),
  pan: <path d="M4.5 13C3 11 0.5 9 0.5 7 1.5 6 3 7.5 3.5 8L2.5 3.5C2.5 2 4 2 4.5 3.5L5.5 6.5V2C6 0.5 7.5 0.5 7.6 2V6.5L8.5 2.5C9 1.3 10.5 1.5 10.3 3L10 7 11.5 5C12.5 4 13.5 5 13 6 12 9 11.5 11 10 13Z" stroke="#6b7da4" fill="#f1f4fb" />,
  zoomArea: (
    <>
      <rect x="1" y="1" width="12" height="12" stroke="#2b3f8c" strokeDasharray="2 1.5" />
      <circle cx="6" cy="6" r="3.3" fill="#cdeafc" stroke="#5c93c6" />
      <path d="M8.5 8.5L12 12" stroke="#e0a03a" strokeWidth="2" />
    </>
  ),
  zoomDyn: (
    <>
      <circle cx="4.5" cy="5.5" r="3.7" fill="#cdeafc" stroke="#5c93c6" />
      <path d="M7 8.5L10 12" stroke="#e0a03a" strokeWidth="2" />
      <path d="M12 2V12M10.5 3.5L12 1.5 13.5 3.5M10.5 10.5L12 12.5 13.5 10.5" stroke="#3a4f96" strokeWidth="0.8" />
    </>
  ),
  center: (
    <>
      <path d="M7 1V5.500M9 7.500H14M7 9.500V13.500M1 7.500H5" stroke="#1d3f9c" strokeWidth="1.6" />
      <path d="M1.500 2L5.500 5.500M5.500 3V5.500H3M2.500 12L4.500 10" stroke="#d83020" strokeWidth="1.2" />
      <circle cx="7" cy="7.5" r="1.3" fill="#f0b41c" />
    </>
  ),
  measure: (
    <>
      <path d="M1 2.5H13M1 1V4M13 1V4" stroke="#d3382a" strokeDasharray="2 1" />
      <rect x="0.5" y="6.5" width="13" height="5.5" fill="#bcd3f2" stroke="#3e62a0" />
      <path d="M3 7V9M5.5 7V9M8 7V9M10.5 7V9" stroke="#3e62a0" />
    </>
  ),
  full: (
    <>
      <rect x="1" y="1.5" width="12" height="10" fill="#d9eafd" stroke="#2b63b6" strokeWidth="1.6" />
      <path d="M7 1V13.5M1 6.5H13M4 13H10" stroke="#2b63b6" strokeWidth="1.5" />
    </>
  ),
  reset: (
    <>
      <circle cx="4" cy="6" r="3.5" fill="#d7ecfb" stroke="#6d9cc8" />
      <path d="M6 4.5L9 1.5 9.5 3.5C13.5 5 14 9 10 13L8 11C10.5 9 10.5 7.5 9 6.5L8.5 8.5Z" fill="#f6a43a" stroke="#c2680c" strokeWidth="0.7" />
    </>
  ),
  diagnose: (
    <>
      <path d="M1 1V13H13Z" fill="#9b9b9b" />
      <path d="M6 4.5C8 1.5 11.5 1.5 13.5 4.5 11.5 7 8 7 6 4.5Z" stroke="#8b8b8b" fill="#eee" />
      <circle cx="10" cy="4.5" r="1.3" fill="#777" />
    </>
  ),
  layers: (
    <g strokeWidth="0.7">
      <path d="M1 10L4 7.5H13V10L10 12.5H1Z" fill="#5f93dc" stroke="#234f96" />
      <path d="M1 7.5L4 5H13V7.5L10 10H1Z" fill="#f08f2a" stroke="#a85508" />
      <path d="M1 4.5L4 2H13V4.5L10 7H1Z" fill="#f8cc3a" stroke="#a87a08" />
    </g>
  ),
  axes: (
    <>
      <path d="M2 2V12H12M2 12L11 4M1 4L2 1.5 3.5 4M10.5 10.5L13 12 10.5 13.5" stroke="#939393" />
      <path d="M5 3L8 6M8 3L5 6" stroke="#a8a8a8" />
    </>
  ),
  plane: (
    <path d="M1 5L5 1 13 7 8 13ZM3 3L10.5 10M5 9L9 4M3 7L7 2.5M6.5 11L11 5.5" stroke="#939393" fill="#ddd" />
  ),
  density: (
    <>
      <rect x="1" y="1" width="12" height="12" fill="#fbd8d4" />
      <path d="M1 2H7M9 2H13M1 5H5M7 5H13M1 8H8M10 8H13M1 11H5M7 11H13M4 1V5M9 3V7M5 7V13M11 8V13M1 13L6 8M8 5L13 1" stroke="#dc3227" strokeWidth="1.3" />
    </>
  ),
  remove: <path d="M1.5 2L12.5 12.5M12 1.5L1.5 12.5" stroke="#8a8a8a" strokeWidth="1.2" />,
  props: (
    <>
      <rect x="1" y="4.5" width="9" height="8.5" fill="#f1f1f1" stroke="#8f8f8f" />
      <path d="M3 7H8M3 9H8M3 11H6" stroke="#9a9a9a" />
      <path d="M5 3L8 1H13V6L10 7.5 8 5Z" fill="#c3c3c3" stroke="#8f8f8f" />
    </>
  ),
};

type Entry = { icon?: string; text: string; key?: string; tail?: string; off?: boolean; pressed?: boolean };

const menu: Entry[][] = [
  [{ icon: "select", text: "选择", key: "S" }],
  [
    { icon: "rotate", text: "旋转", key: "R", pressed: true },
    { icon: "pan", text: "平移", key: "P" },
    { icon: "zoomArea", text: "局部放大", key: "B" },
    { icon: "zoomDyn", text: "动态缩放", key: "Z" },
    { icon: "center", text: "居中", key: "C" },
    { icon: "measure", text: "测量", key: "M" },
  ],
  [
    { icon: "full", text: "全屏", key: "W" },
    { icon: "reset", text: "重设", key: "E" },
  ],
  [
    { icon: "diagnose", text: "网格诊断", key: "G", off: true, pressed: true },
    { icon: "layers", text: "层", key: "L", tail: "...", pressed: true },
    { text: "显示日志" },
  ],
  [
    { icon: "axes", text: "激活为局部坐标系", key: "V", off: true },
    { icon: "plane", text: "激活为建模基准面", key: "I", off: true },
    { icon: "density", text: "定义网格密度", key: "Y", tail: "..." },
  ],
  [
    { icon: "remove", text: "删除", key: "D", off: true },
    { icon: "props", text: "属性", key: "O", tail: "...", off: true },
    { icon: "props", text: "更改属性类型", key: "H", tail: "...", off: true },
  ],
];

function ContextMenu() {
  return (
    <div role="menu" className="absolute top-[112px] left-[121px] z-10 w-[162px] border border-[#999] bg-[#f1f1f1] p-px pb-[3px] text-[10px] shadow-[2px_2px_1px_#555]">
      {menu.map((section, i) => (
        <div key={section[0].text} role="group">
          {i > 0 && <hr className="mx-[2px] my-[3px] border-t border-[#aaa]" />}
          {section.map((e) => (
            <button
              key={e.text}
              role="menuitem"
              disabled={e.off}
              className={`flex h-[16px] w-full items-center pl-px whitespace-nowrap ${e.off ? "text-[#8a8a8a]" : "text-[#111]"}`}
            >
              <span className={`flex size-[16px] items-center justify-center ${e.pressed ? "border-t border-l border-[#999] bg-[#f9f9f9]" : ""}`}>
                {e.icon && <Svg size="size-[13px]" box={14}>{menuIcons[e.icon]}</Svg>}
              </span>
              <span className="ml-[2px]">
                {e.text}
                {e.key && <>(<u>{e.key}</u>)</>}
                {e.tail}
              </span>
            </button>
          ))}
        </div>
      ))}
    </div>
  );
}

/* ---------- page ---------- */

export default function App() {
  return (
    <div className="min-h-screen bg-[#dfe6ee]">
      <div className={`flex min-h-screen flex-col rounded-[6px] border border-[#16283c] bg-[linear-gradient(to_right,#58aee0,#3f92d2_60%,#1a559c_95%)] px-[6px] pb-[6px] ${UI}`}>
        <div className="-mt-px flex flex-1 flex-col">
          <Header />
          <Ribbon />
          <div className="h-[3px] shrink-0 border-t border-[#888] bg-[#e6e6e6]" />
          <div className="flex flex-1">
            <Sidebar />
            <main className="relative flex min-w-0 flex-1 flex-col bg-[#f0f0f0] pl-[2px]">
              <div className="relative mr-[3px] flex-1 overflow-hidden border-t-2 border-l border-[#777b80] bg-[#93979b]">
                <div aria-hidden className="absolute top-[157px] left-[416px] flex items-start text-[#6f7377]">
                  <span className="font-['DejaVu_Serif',serif] text-[75px] leading-[87px] font-bold">k</span>
                  <span className="mt-[24px] ml-[2px] text-[9px]">®</span>
                </div>
                <StudyWindow />
              </div>
              <div className="mt-[5px] flex h-[22px] border-t-2 border-[#555]">
                <div className="flex h-[19px] w-[119px] items-center border-x border-b border-[#777] bg-white pl-px text-[10px]">
                  <StudyIcon />
                  <span className="flex-1 text-center"><Mono>Study</Mono></span>
                  <button aria-label="关闭 Study" className="flex size-[12px] items-center justify-center rounded-[1px] border border-[#6b2118] bg-linear-to-b from-[#e08a7a] to-[#b93a26]">
                    <Svg size="size-[7px]" box={8}><path d="M1.5 1.5L6.5 6.5M6.5 1.5L1.5 6.5" stroke="#fff" strokeWidth="1.8" /></Svg>
                  </button>
                </div>
              </div>
              <ContextMenu />
            </main>
          </div>
          <footer className="flex h-[20px] shrink-0 items-center border-t border-b border-[#888] bg-linear-to-b from-[#e4e4e4] to-[#c6c6c6] pl-[4px]">
            <button aria-label="展开状态栏">
              <svg viewBox="0 0 7 5" className="h-[5px] w-[7px]" aria-hidden>
                <path d="M0 0L3 2.5 0 5ZM3.5 0L6.5 2.5 3.5 5Z" fill="#111" />
              </svg>
            </button>
          </footer>
        </div>
      </div>
    </div>
  );
}
